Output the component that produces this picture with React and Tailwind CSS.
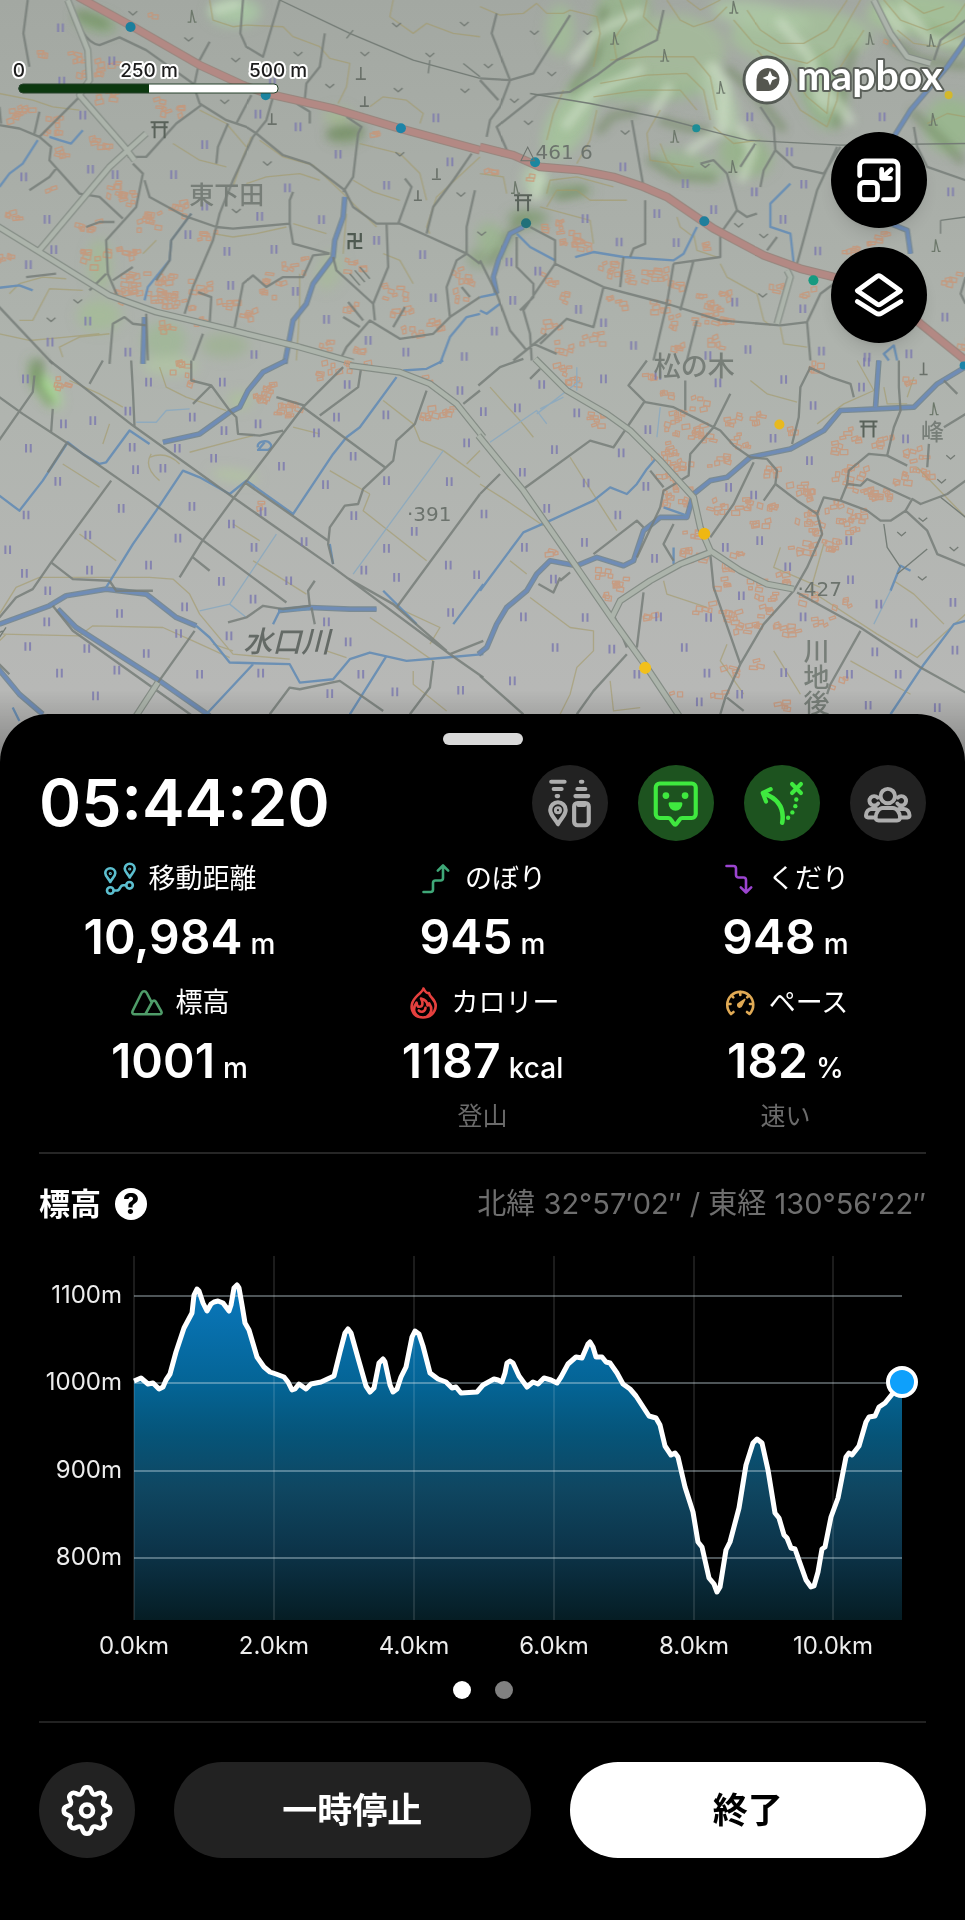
import React, { useState } from 'react';

// Map sheet: four tiles, each 480x360 on screen and drawn at 3x
const TILES = [
  {
    x: 0,
    y: 0,
    highway: 'M235 -10L400 80L600 195L730 255L800 280L1000 325L1200 385L1440 450',
    wide: [
      'M205 0L265 150L270 240L240 285L375 440L405 480',
      'M440 400L330 500L120 750',
      'M-10 675L120 755L330 885L470 935L700 990L900 1040L1060 1085',
    ],
    roads:
      'M85 0L72 100L90 200M250 95Q270 130 300 135L360 112L440 150L580 250L600 310L680 360L740 380L770 400L850 465L930 490L1035 570L1060 620L1130 670L1200 670L1290 710L1400 760L1440 790M240 290L120 410L155 440L150 480L240 580L300 590L370 655M0 375L60 385L120 410M385 470L440 470L530 370L605 315M840 0L790 170L740 140L722 100L730 0M630 125L600 180L585 250M400 490L430 520L410 620L320 720L325 820L355 890M435 540L450 590L550 645L650 680L700 685L870 670L880 730L990 760M870 670L870 600L880 575M820 290L800 360L760 410L700 540L660 640L640 720L580 860L555 940M755 285L710 370M685 370L655 440L650 490M1040 350L1085 380L1075 400L1060 530L1030 575M1415 460L1360 540L1300 620L1280 700M1215 535L1235 560L1195 670M1425 570L1400 680L1400 760L1370 780L1340 860L1350 950L1300 1000L1200 1015L1110 960L1040 1040L1020 1080M1160 670L1165 800L1120 910L1125 960M1000 770L1010 810L1120 910M1350 950L1440 890M1385 860L1410 890M705 980L730 850L760 825L800 860L850 830L910 830L940 765L990 760M595 875L635 890L630 970M-5 915L160 1090M575 640L515 720L510 780L470 840M975 100L960 200L920 250L915 300M90 570L150 530L170 505M120 335L105 400M0 320L5 370M170 820L80 830M330 1090L340 970L375 950L400 970L440 975M440 940L445 1080M1045 905L1090 960M1030 950L1080 980M1215 920L1180 980M260 680L300 665L345 665M270 870L320 820M340 840L400 800M610 1000L580 1080M890 310L930 335L930 370',
    thin: 'M840 0L1050 100L1240 180L1440 235M1060 90L1040 115M1390 190L1440 230M1290 180L1285 220M1050 820L1080 855M1065 810L1095 845M1080 800L1110 835',
    rivers: 'M1035 590L1030 650L1005 720L1000 770L940 850L920 910L880 960L855 1090M435 950L430 1090',
    streams: 'M0 560L30 520L70 490L115 420M575 640L515 720L510 780L445 860L435 900M1440 940L1400 950L1350 1010L1320 1090M250 390L215 430L180 420L150 410M100 870L60 855L0 862',
    contours:
      'M0 280L100 300L160 320L240 330M630 0L640 60L700 80L740 75L850 80L880 110L960 140L990 175L1050 190L1040 260L1015 310M1110 320L1150 290L1220 300L1270 340L1260 370M780 420L850 470L940 495L1030 580L1130 680M520 430L600 480L680 500M1060 540L1120 575L1200 600M1290 700L1280 680L1310 590L1440 470M740 550L800 530L900 520L960 540M30 880L60 850L130 830L200 835M0 1000L90 1020L200 1010L300 1000M900 820L900 920L890 1080M1040 640L1030 760M880 670L980 700M470 720L430 760M1180 0L1170 50L1240 100L1280 70L1360 100L1440 110M1150 760L1200 780L1240 850M190 1070L180 1040L240 1010L330 1000M1080 430L1200 460L1260 520L1280 600M600 330L680 370L740 440M700 560L730 470L755 410M640 700L700 710L770 700L860 680M250 870L150 865L100 960L60 960',
    paddies: [[183, 83], [187, 243], [250, 345], [337, 182], [273, 507], [73, 530], [143, 657], [163, 748], [87, 793], [265, 962], [152, 1025], [385, 1055], [522, 523], [615, 433], [775, 342], [895, 380], [1015, 462], [1308, 353], [1350, 485], [1160, 555], [863, 563], [780, 648], [965, 658], [615, 618], [565, 703], [682, 753], [823, 747], [693, 855], [887, 873], [980, 957], [1130, 720], [1268, 763], [1300, 892], [1105, 1020], [1218, 1055], [763, 1062], [1393, 1068], [347, 523], [818, 245]],
    ticks: [[400, 40], [567, 118], [708, 180], [990, 258], [895, 162], [1095, 162], [1195, 270], [1190, 75], [1393, 72], [1290, 165], [675, 305], [803, 490], [710, 632], [1200, 462], [1383, 583], [155, 958], [235, 903], [1395, 272]],
    houses: [[130, 160, 3], [220, 165, 5], [250, 215, 5], [310, 200, 7], [320, 290, 7], [500, 320, 9], [50, 340, 9], [150, 370, 8], [190, 460, 5], [300, 420, 6], [150, 565, 2], [330, 560, 7], [370, 590, 7], [430, 660, 10], [260, 670, 7], [30, 640, 5], [15, 770, 5], [540, 620, 6], [280, 770, 10], [370, 750, 8], [420, 840, 14], [370, 870, 8], [480, 890, 10], [540, 900, 10], [600, 850, 7], [620, 700, 5], [500, 830, 6], [680, 910, 6], [740, 940, 5], [820, 830, 6], [880, 790, 7], [800, 880, 4], [1060, 790, 6], [1050, 910, 4], [1180, 870, 8], [1200, 930, 5], [1230, 990, 6], [1290, 965, 6], [1390, 820, 8], [1370, 880, 4], [980, 1030, 5], [1130, 400, 3], [445, 45, 2], [500, 970, 5], [600, 960, 4], [1070, 1050, 4]],
  },
  {
    x: 480,
    y: 0,
    highway: 'M0 440L100 465L180 500L300 510L400 530L490 560L560 590L700 685L850 765L960 805L1060 830L1200 880L1320 970L1455 1080',
    wide: ['M920 810L930 830L890 970', 'M1180 0L1230 100L1280 170L1350 190'],
    roads:
      'M50 40L35 100L90 240L60 320L30 360L20 410M270 45L160 220L90 240L0 235M0 240L55 300M85 460L50 380L170 285L270 275L350 225L410 180L530 120L550 30M455 360L490 560M495 600L495 730L460 745L450 770M580 790L720 770L720 700L770 630L740 520L700 480L660 490M770 630L800 650L830 640M225 790L370 860L560 910L720 960L900 975L980 965M225 790L225 720L150 680M225 790L130 930L150 1000L155 1080M370 860L340 980L260 955L180 1030M110 710L110 800L160 850L160 890L120 930M430 770L420 860M580 790L560 910L520 1080M640 780L600 930M0 780L50 880L90 990L140 1050M200 1000L100 1080M650 960L620 1080M980 965L990 1080M980 965L1020 880L1060 850M840 320L880 380L885 450L850 510L840 560M885 450L940 500L1030 520L1080 440M1070 440L1010 570L950 790M825 430L780 500M1300 380L1310 440L1340 500L1455 540M1360 180L1380 120L1455 60M1455 830L1440 880L1455 910M890 710L860 750M160 1030L230 1060',
    thin: 'M150 280L330 310L550 355L700 395L800 420L1080 435L1455 430M1380 660L1455 650M1380 660L1380 700',
    rivers: 'M1470 100L1400 200L1290 330L1240 410M1230 670L1280 690L1290 760M130 680L90 700L55 780L40 830L50 880',
    streams: 'M110 700L150 740L225 780M285 770L340 755L430 770L580 780L610 760L650 680M50 880L0 890M60 910L20 940L0 930M1225 1080L1210 1060L1240 1035L1250 1080M930 550L870 610L870 680L930 700L940 790',
    contours:
      'M0 20L60 45L130 40L170 10L200 40L250 40L270 30L350 50L360 100L340 200M420 0L440 60L400 120L410 180M500 0L490 50L540 100M560 0L600 60L640 80L700 60L740 20M620 0L660 30L720 0M800 30L840 90L900 130L970 130L1040 90L1100 0M760 60L820 130L900 170L980 190L1060 140L1140 0M830 150L900 230L960 330L1040 380L1070 300L1080 200L1150 90M930 210L980 290L1040 340L1050 240M1210 0L1260 60L1340 90L1420 60L1455 10M1270 0L1330 40L1390 20M1250 90L1300 130L1370 140L1455 100M390 180L500 170L640 170L690 230L710 330M360 250L500 225L620 220L670 270L690 360M340 290L480 270L600 270L650 330M250 270L220 340L200 420M350 330L330 420L290 490M540 330L500 400L510 480L640 500M600 520L560 480L540 430M700 380L760 430L840 420M200 620L230 570L290 570L330 600L440 600M720 790L740 830L830 880L850 960L870 975M1340 370L1400 340L1455 350M1090 880L1120 830M200 580L210 540L290 530L400 560M590 650L600 680L640 710M0 520L70 530L80 580M180 620L330 660L340 730M640 700L650 750L710 770M900 980L910 1030L980 1040',
    paddies: [[428, 500], [615, 550], [700, 628], [530, 640], [315, 655], [417, 725], [588, 727], [822, 575], [808, 350], [927, 455], [970, 552], [1205, 350], [908, 657], [1012, 752], [1410, 575], [763, 905], [967, 925], [1393, 950], [803, 1047], [683, 1065], [87, 785], [173, 812], [98, 900], [295, 927], [370, 967], [43, 992], [460, 1035], [1023, 1052], [1285, 1060], [1160, 1070]],
    ticks: [[163, 98], [322, 98], [215, 222], [103, 302], [25, 198], [145, 368], [435, 397], [675, 497], [775, 675], [850, 707], [847, 885], [5, 700]],
    houses: [[210, 680, 7], [250, 710, 8], [300, 730, 5], [370, 800, 8], [460, 820, 6], [520, 820, 8], [200, 830, 4], [235, 885, 4], [400, 900, 5], [540, 910, 6], [580, 850, 4], [690, 900, 9], [730, 950, 7], [660, 950, 5], [570, 960, 5], [210, 975, 5], [240, 1030, 5], [330, 1010, 6], [600, 1030, 5], [700, 1020, 5], [880, 860, 4], [1100, 740, 6], [1180, 710, 6], [1410, 830, 5], [20, 510, 3], [155, 530, 2], [720, 880, 4], [650, 730, 3], [980, 870, 3], [1225, 130, 3], [1440, 1020, 3]],
  },
  {
    x: 0,
    y: 360,
    wide: ['M1050 15L1200 35L1290 70L1370 130L1450 230', 'M400 1080L475 965'],
    roads:
      'M0 110L70 160L200 245L450 420L860 725M150 0L400 195L700 410L1000 620L1350 880L1450 950M1030 20L910 140L700 415L605 545L540 650M-5 245L100 95L105 45M155 215L160 145M335 360L155 605L100 685L50 710L0 770M155 605L220 655L330 660M200 250L145 335M395 0L400 90L405 200M575 0L575 60L635 75L690 150L710 170L715 220L780 225L850 210M635 75L580 130M910 140L1155 320M1280 90L1245 190L1190 240L1180 300L1090 385L1075 430L1035 435L990 500L985 550L1000 610M735 365L985 540M1440 400L1190 740M580 590L630 630M585 810L475 965M685 785L740 770L790 735L850 745L930 735L925 690L945 660M935 740L945 790M1300 900L1290 980L1230 1060M810 1060L870 980L900 985L1020 960L1150 1050M1350 880L1450 840M330 660L350 690L460 690M160 735L220 810L600 1080M310 0L270 70M1390 130L1440 90M1085 15L1075 80L960 165M915 135L830 110M1040 650L1180 730L1340 870M0 910L30 940',
    thin: 'M0 830L20 800M10 810L0 815',
    rivers: 'M0 790L150 735L200 705L320 685L440 700L530 770L590 795M490 245L600 220L690 155L720 140L745 90L790 35L860 0M835 750L930 740L1050 745L1130 745M-10 915L60 1000L130 1060M175 745L230 800L480 960L630 1065',
    streams:
      'M0 405L60 450L130 360L205 245L250 280L300 310L320 305L390 210L450 250M320 680L400 550L470 450L550 330L600 350L690 400L740 360L880 460L1000 280L1040 230L1080 200L1190 50M590 795L630 830L690 905L870 910L900 965L1000 955L1050 895L1110 875L1220 900L1340 890L1450 880M1160 885L1050 1060M760 910L620 1060M990 550L1000 610M820 790L840 750L930 745M1210 30L1280 25L1330 0M1450 670L1360 790M775 260a20 14 0 1 1 30 8l-30 0L795 245M1150 690L1250 790M40 1040L60 1080',
    brooks: 'M830 520L690 730L600 750M690 730L740 770M1330 270L1060 640M410 185L470 185L500 150L570 145',
    contours:
      'M0 760L50 680L120 650L450 650L520 655L570 700L600 760L700 880L870 895M455 280Q430 320 480 360M450 290Q500 270 540 310M570 275L700 240L760 225M880 200L960 220M1150 120L1240 190L1260 240L1330 270L1440 350M1110 400L1090 450L1280 600M990 330L1110 400M700 490L780 540M480 20L500 80L560 110L680 150M190 310L300 380M240 520L350 600M10 820L240 825L280 795L490 800L580 840L690 890M1110 770L1200 830L1300 900M640 850L700 870M0 840L20 820M1240 930L1240 970L1340 1050M1190 740L1320 800L1290 850M760 600L920 700M980 870L1040 890M330 190L310 250M210 60L300 100L370 140M1440 270L1400 310',
    paddies: [[78, 55], [192, 190], [280, 180], [87, 263], [175, 362], [80, 463], [25, 567], [75, 638], [447, 65], [385, 152], [668, 65], [578, 170], [673, 210], [775, 190], [398, 260], [408, 327], [490, 323], [533, 263], [642, 293], [845, 317], [950, 217], [1010, 170], [1042, 72], [1158, 163], [1380, 90], [1400, 247], [1060, 287], [1160, 360], [1348, 363], [977, 372], [1062, 465], [1243, 512], [577, 437], [790, 453], [365, 443], [695, 490], [913, 543], [763, 560], [535, 532], [265, 523], [1160, 563], [1345, 613], [1092, 628], [1190, 650], [447, 613], [270, 628], [665, 662], [867, 660], [145, 690], [760, 715], [555, 738], [360, 758], [142, 783], [1352, 755], [980, 783], [688, 825], [537, 818], [85, 857], [262, 863], [440, 878], [1045, 843], [1083, 940], [783, 937], [600, 940], [352, 928], [180, 937], [288, 1005], [990, 998], [1185, 993], [1382, 988], [1430, 642]],
    ticks: [],
    houses: [[170, 65, 6], [530, 20, 6], [550, 70, 2], [790, 100, 6], [800, 75, 5], [850, 140, 8], [870, 130, 4], [990, 15, 4], [960, 45, 3], [1030, 15, 4], [1090, 15, 4], [1280, 150, 6], [1330, 145, 5], [765, 430, 2], [780, 115, 4], [1275, 50, 3]],
  },
  {
    x: 480,
    y: 360,
    wide: [
      'M-5 225L130 390L290 620L400 780L500 920L600 1070',
      'M165 -5L260 90L380 160L450 210L540 300L640 410L660 500L690 570L780 630L860 670L940 685',
      'M690 575L600 610L510 660L420 720L395 770',
    ],
    roads:
      'M-5 75L60 20L130 -5M180 25L150 55M500 0L445 75L495 125L580 140L650 175L720 210L760 255L810 290L860 295L890 330L885 370L950 420L1010 460L1025 520L980 620L940 690L850 790L780 910L735 1010L720 1060M495 120L400 260L330 240L130 385M750 100L700 200L630 280L625 345L550 390L540 440L470 590M820 305L760 430L690 530M990 20L960 80L955 170L935 250M985 20L1050 50L1110 70L1120 110M1255 0L1255 80L1260 150L1240 200L1220 285L1280 315M1220 285L1165 280L1105 330L1100 370L1080 420L1030 410L1010 460M1080 420L1160 450L1200 480L1230 480L1275 450L1340 510L1370 580L1455 615M1275 450L1295 415L1320 430L1400 400L1455 360M1100 370L1140 375L1160 355L1290 415M1390 200L1455 160M1345 250L1340 320M1390 60L1430 100M690 580L700 680L780 910M950 695L1140 800L1320 920L1455 995M1140 810L1050 970L1040 1000M490 695L470 860M440 880L340 990L290 1060M0 945L130 1060M340 580L470 480L490 500M240 650L220 695L175 670M270 635L240 660M615 60L615 150M60 340L0 400M885 370L850 420M580 490L550 550L580 600M400 760L440 860M740 1010L790 1050M550 380L510 330',
    thin: 'M1380 410L1455 470M1210 490L1220 560L1260 620M1340 565L1250 640',
    rivers:
      'M1470 10L1370 70L1300 140L1190 145L1080 150L1030 210L930 265L810 290L740 350L690 360L640 400L620 470L540 470L490 510L460 600L430 615L350 590L290 615L210 600L170 640L140 690L80 740L50 790L20 860L-5 880M1195 0L1185 140',
    streams: 'M620 465L550 440M0 690L130 515L210 480L340 420L390 380L440 400L470 370L500 325L530 290M1455 780L1420 790L1330 910L1230 1060M580 560L580 610M1290 630L1260 615L1230 690',
    brooks: 'M30 245L170 150L200 190M180 145L250 110M1230 690L1180 790M530 230L540 140M290 90L290 20M170 160L300 60',
    contours:
      'M0 370L80 420L190 495M30 80L120 180L160 230M270 290L320 370L410 510M90 600L140 640M150 710L270 800L340 810L340 870L290 920L270 1000L240 1060M810 60L860 100L950 125M900 560L880 620L1020 680M1030 550L990 690L1190 820L1310 890L1455 760M740 850L720 900L790 1000M1310 320L1455 470M550 660L560 700L680 740M880 870L960 1000M1110 900L1290 1000M1240 660L1300 700L1390 790M1130 0L1180 90L1090 130L1010 190M1210 80L1220 130L1280 130M1300 50L1280 110M390 960L400 1050L480 1040',
    paddies: [[185, 72], [370, 55], [112, 142], [10, 153], [290, 157], [223, 267], [127, 335], [503, 207], [423, 277], [318, 367], [497, 377], [200, 443], [413, 463], [12, 460], [133, 560], [313, 545], [523, 593], [220, 655], [130, 768], [315, 770], [535, 768], [395, 865], [225, 860], [97, 960], [470, 940], [612, 860], [685, 770], [783, 705], [735, 560], [838, 540], [922, 618], [1105, 540], [1110, 657], [968, 768], [1195, 730], [1300, 787], [1183, 873], [1107, 940], [1253, 940], [1423, 868], [1417, 725], [910, 935], [680, 937], [657, 1023], [778, 1000], [987, 300], [878, 233], [998, 135], [910, 57], [713, 67], [1143, 80], [1275, 235], [745, 380], [820, 403], [1163, 1033], [1370, 1040], [533, 45], [1158, 5]],
    ticks: [[1327, 477], [1263, 520], [1420, 565], [1325, 653], [1383, 362], [1410, 290]],
    houses: [[240, 20, 5], [265, 55, 5], [500, 50, 4], [560, 95, 5], [650, 125, 5], [750, 170, 6], [810, 165, 6], [580, 160, 5], [620, 215, 10], [570, 190, 4], [660, 220, 6], [555, 260, 5], [780, 235, 6], [690, 300, 3], [560, 330, 10], [600, 310, 5], [540, 290, 5], [740, 285, 3], [330, 170, 7], [350, 200, 2], [580, 405, 9], [600, 390, 4], [700, 430, 7], [770, 430, 7], [860, 330, 6], [860, 430, 5], [940, 380, 7], [990, 400, 5], [970, 460, 5], [990, 500, 6], [960, 550, 8], [830, 490, 5], [1050, 540, 7], [1100, 490, 8], [1120, 460, 6], [1060, 430, 5], [1120, 330, 8], [1080, 350, 5], [1200, 400, 8], [1140, 390, 6], [1250, 350, 6], [1310, 340, 7], [1300, 280, 7], [1200, 240, 7], [1100, 220, 6], [1080, 260, 5], [630, 510, 5], [605, 570, 5], [650, 590, 4], [770, 575, 3], [730, 620, 5], [720, 665, 4], [820, 670, 5], [850, 700, 5], [900, 650, 5], [370, 630, 5], [420, 660, 6], [370, 700, 3], [210, 570, 3], [500, 765, 3], [660, 735, 5], [740, 750, 6], [790, 790, 10], [840, 750, 5], [900, 790, 4], [980, 710, 5], [1020, 775, 5], [1080, 720, 4], [740, 920, 4], [820, 910, 3], [930, 820, 4], [1070, 960, 3], [900, 1030, 4], [1280, 60, 4], [920, 205, 3], [710, 990, 3], [575, 990, 2], [1010, 15, 4]],
  },
];

// Green slopes: cx, cy, rx, ry, rotation, colour
const HILLS = [
  [96, 22, 22, 9, 15, '#86a87a'],
  [235, 12, 26, 14, 0, '#a9c9a4'],
  [345, 134, 18, 9, 0, '#7f9a70'],
  [338, 116, 14, 8, 0, '#a3b88f'],
  [620, 30, 28, 60, 10, '#98b58d'],
  [570, 120, 20, 42, 30, '#a5c49b'],
  [640, 85, 70, 16, 0, '#9ab990'],
  [675, 50, 50, 36, 0, '#a4bb9a'],
  [690, 165, 36, 12, 15, '#9bb692'],
  [720, 100, 14, 38, -20, '#b4ccac'],
  [745, 155, 28, 20, 20, '#96b489'],
  [800, 36, 70, 28, 0, '#a4bf9a'],
  [822, 90, 22, 40, -15, '#94b488'],
  [760, 16, 50, 14, 10, '#adc8a4'],
  [920, 14, 54, 22, 0, '#a3c296'],
  [950, 125, 26, 28, 0, '#98b78c'],
  [945, 40, 34, 9, 20, '#8cab7f'],
  [560, 30, 14, 26, 0, '#a1bc97'],
  [535, 180, 12, 16, 0, '#b4ceab'],
  [528, 218, 20, 8, 0, '#7d9a6f'],
  [565, 190, 28, 6, 0, '#8aa57d'],
  [492, 240, 14, 18, -30, '#9ab58e'],
  [47, 388, 8, 22, -35, '#a6e28b'],
  [36, 372, 5, 14, -10, '#6f9a58'],
  [100, 315, 22, 16, 0, '#a4bb98'],
  [100, 265, 12, 26, 0, '#a3b897'],
  [165, 340, 22, 18, 0, '#a0b796'],
  [170, 365, 28, 10, 0, '#b0c3a5'],
  [225, 345, 24, 12, 0, '#9fb294'],
  [330, 270, 12, 20, 20, '#a8b99c'],
  [478, 258, 10, 9, 0, '#8ba37e'],
  [240, 400, 12, 8, 0, '#acc19a'],
  [235, 475, 24, 5, 8, '#b3c79f'],
];

// Hill shading: lit ridges and the shaded side below them
const RIDGES =
  'M566 125L590 95L640 70M655 110L668 88M690 150L722 128L724 84L712 66M742 178L752 150L740 128M780 22L812 60L818 100M850 120L828 92M808 66L826 108M902 8L930 40L962 44M536 196L540 176M575 60L600 30L640 12M885 10L900 30M215 10L238 4';
const SHADES =
  'M600 130L612 116L634 112M662 120L680 126L712 132M728 70L752 90L782 128M836 124L842 92L852 50M650 160L676 176L712 178M604 10L596 56L572 90M890 40L920 60L964 66M912 112L940 138L960 160M560 196L582 190M505 240L520 222M332 134L360 130M80 14L104 24M490 262L500 250M40 362L36 382L50 402';

const MAP_DOTS = [
  [131, 27, 5, '#1c7f9d'],
  [266, 95, 5, '#1c84a0'],
  [401, 128, 5, '#1c84a8'],
  [535, 162, 5, '#1c87a0'],
  [696, 128, 4, '#1c8d96'],
  [704, 221, 5, '#1f7f9c'],
  [813, 280, 5, '#179a80'],
  [526, 223, 5, '#21707a'],
  [963, 365, 4, '#1c84a8'],
  [779, 424, 5, '#e8b91e'],
  [704, 533, 6, '#efb712'],
  [645, 667, 6, '#f2c01c'],
  [948, 95, 4, '#d3b82c'],
];

const TREES = [[192, 16], [614, 38], [664, 55], [720, 87], [869, 38], [930, 40], [674, 136], [732, 166], [733, 7], [932, 119], [935, 245], [933, 408], [515, 187]];

// Small house outlines scattered round a point
function housePath([cx, cy, count]) {
  let seed = cx * 31 + cy * 17 + count;
  const next = () => {
    seed = (seed * 1103515245 + 12345) % 2147483648;
    return seed / 2147483648;
  };
  let d = '';
  for (let i = 0; i < count; i++) {
    const spread = 14 + count * 4;
    const x = Math.round(cx + (next() - 0.5) * spread * 1.6);
    const y = Math.round(cy + (next() - 0.5) * spread);
    const w = Math.round(10 + next() * 14);
    const h = Math.round(7 + next() * 9);
    const tilt = Math.round((next() - 0.5) * 12);
    d += `M${x} ${y}l${w} ${tilt}l${-Math.round(tilt / 2)} ${h}l${-w} ${-tilt}z`;
  }
  return d;
}

function Tile({ tile }) {
  return (
    <g transform={`translate(${tile.x} ${tile.y}) scale(0.33333)`} fill="none" strokeLinejoin="round">
      <path d={tile.contours} stroke="#a39a68" strokeOpacity="0.6" strokeWidth="4" />
      <path d={tile.houses.map(housePath).join('')} stroke="#cd926f" strokeOpacity="0.7" strokeWidth="4" />
      <path d={tile.rivers} stroke="#74868f" strokeOpacity="0.9" strokeWidth="17" />
      <path d={tile.rivers} stroke="#6f8cb6" strokeWidth="10" />
      <path d={tile.streams} stroke="#6c90b4" strokeWidth="7" />
      {tile.brooks && <path d={tile.brooks} stroke="#8faabd" strokeWidth="4" />}
      <path d={tile.roads} stroke="#777e79" strokeOpacity="0.85" strokeWidth="7" />
      <path d={tile.thin} stroke="#747c76" strokeWidth="4" />
      {tile.wide.map((d) => (
        <path key={d} d={d} stroke="#858d86" strokeWidth="21" />
      ))}
      {tile.wide.map((d) => (
        <path key={d} d={d} stroke="#acb4ab" strokeWidth="14" />
      ))}
      {tile.highway && <path d={tile.highway} stroke="#98867e" strokeWidth="26" />}
      {tile.highway && <path d={tile.highway} stroke="#b38984" strokeWidth="20" />}
      <path
        d={tile.paddies.map(([x, y]) => `M${x - 7} ${y - 13}v26M${x + 7} ${y - 13}v26`).join('')}
        stroke="#7c7aae"
        strokeOpacity="0.85"
        strokeWidth="6"
      />
      <path d={tile.ticks.map(([x, y]) => `M${x - 13} ${y - 6}l13 11l13 -11`).join('')} stroke="#747b75" strokeWidth="4" />
    </g>
  );
}

function Torii({ x, y }) {
  return (
    <path
      d={`M${x - 9} ${y - 7}h18M${x - 8} ${y - 2}h16M${x - 5} ${y - 7}v16M${x + 5} ${y - 7}v16`}
      stroke="#59625a"
      strokeWidth="2"
      fill="none"
    />
  );
}

function MapView() {
  return (
    <svg className="absolute inset-0 h-full w-full" viewBox="0 0 965 761" preserveAspectRatio="xMidYMin slice" aria-hidden="true">
      <defs>
        <linearGradient id="ground" x1="0" y1="0" x2="0" y2="1">
          <stop offset="0" stopColor="#a3a8a2" />
          <stop offset="0.45" stopColor="#aeb3ad" />
          <stop offset="1" stopColor="#b9b9b8" />
        </linearGradient>
        <linearGradient id="sheetShade" x1="0" y1="0" x2="0" y2="1">
          <stop offset="0" stopColor="#000" stopOpacity="0" />
          <stop offset="1" stopColor="#000" stopOpacity="0.3" />
        </linearGradient>
        <filter id="slope" x="-20%" y="-20%" width="140%" height="140%">
          <feGaussianBlur stdDeviation="6" />
        </filter>
        <filter id="ridge" x="-20%" y="-20%" width="140%" height="140%">
          <feGaussianBlur stdDeviation="4" />
        </filter>
      </defs>
      <rect width="965" height="761" fill="url(#ground)" />
      <g filter="url(#slope)">
        {HILLS.map(([cx, cy, rx, ry, turn, fill]) => (
          <ellipse key={`${cx}-${cy}`} cx={cx} cy={cy} rx={rx} ry={ry} transform={`rotate(${turn} ${cx} ${cy})`} fill={fill} opacity="0.85" />
        ))}
      </g>
      <g filter="url(#ridge)" fill="none" strokeLinejoin="round" strokeLinecap="round">
        <path d={SHADES} stroke="#70885f" strokeOpacity="0.6" strokeWidth="8" />
        <path d={RIDGES} stroke="#d0dfc8" strokeOpacity="0.65" strokeWidth="9" />
      </g>
      {TILES.map((tile) => (
        <Tile key={`${tile.x}-${tile.y}`} tile={tile} />
      ))}
      {MAP_DOTS.map(([x, y, r, fill]) => (
        <circle key={`${x}-${y}`} cx={x} cy={y} r={r} fill={fill} />
      ))}
      <path d={TREES.map(([x, y]) => `M${x - 4} ${y + 6}h3L${x} ${y - 6}L${x + 3} ${y + 6}h2`).join('')} stroke="#6d786b" strokeWidth="1.3" fill="none" />
      <path d="M361 67v12M356 79h10M365 96v10M360 106h9M272 113v10M268 124h9M437 168v10M432 179h9M418 190v10M414 200h8M923 362v12M919 374h8" stroke="#697069" strokeWidth="1.6" fill="none" />
      <Torii x={160} y={129} />
      <Torii x={523} y={202} />
      <Torii x={868} y={428} />
      <g fill="#777e78" fontFamily="'Noto Sans CJK JP', sans-serif" fontWeight="500" textAnchor="middle">
        <text x="227" y="204" fontSize="25">東下田</text>
        <text x="694" y="376" fontSize="27">松の木</text>
        <text x="355" y="248" fontSize="18" fill="#4f5a51" fontWeight="700">卍</text>
        <text x="932" y="439" fontSize="23">峰</text>
        <text x="287" y="651" fontSize="29" fontStyle="italic" fill="#646a66">水口川</text>
        <text x="816" y="637" fontSize="26" textAnchor="start" style={{ writingMode: 'vertical-rl' }}>川地後</text>
      </g>
      <g fill="#6c736d" fontFamily="'DejaVu Sans', sans-serif" fontSize="20">
        <text x="520" y="159">△461 6</text>
        <text x="407" y="520">·391</text>
        <text x="797" y="595">·427</text>
      </g>
      <rect y="690" width="965" height="71" fill="url(#sheetShade)" />
    </svg>
  );
}

function ScaleBar() {
  return (
    <svg className="absolute top-14 left-2" width="320" height="44" viewBox="0 0 320 44" role="img" aria-label="500 m">
      <g
        fontFamily="Inter, sans-serif"
        fontSize="19"
        fontWeight="500"
        textAnchor="middle"
        fill="#1c1c1c"
        stroke="#fff"
        strokeWidth="4"
        strokeLinejoin="round"
        paintOrder="stroke"
      >
        <text x="11" y="21">0</text>
        <text x="141" y="21">250 m</text>
        <text x="270" y="21">500 m</text>
      </g>
      <rect x="11" y="28" width="259" height="9" rx="4" fill="#fff" />
      <path d="M141 28H15a4 4 0 0 0 0 9h126z" fill="#0c380f" />
      <rect x="11" y="28" width="259" height="9" rx="4" fill="none" stroke="#24402a" strokeWidth="1" />
    </svg>
  );
}

function MapboxLogo() {
  return (
    <svg className="absolute top-11 right-1" width="224" height="72" viewBox="0 0 224 72" role="img" aria-label="mapbox">
      <g transform="translate(0 8)">
        <circle cx="30" cy="28" r="23" fill="#fff" stroke="#555b55" strokeWidth="3" />
        <path d="M19.500 39V28a11.500 11.500 0 1 1 12 11z" fill="#55564f" />
        <path d="M33 18.500l2.200 5.300L40.500 26l-5.300 2.200L33 33.500l-2.200-5.300L25.500 26l5.300-2.200z" fill="#fff" />
      </g>
      <text
        x="60"
        y="46"
        fontFamily="Lato, sans-serif"
        fontSize="41"
        fontWeight="700"
        fill="#fff"
        stroke="#5b605a"
        strokeWidth="4"
        strokeLinejoin="round"
        paintOrder="stroke"
      >
        mapbox
      </text>
    </svg>
  );
}

function StatusIcon({ children }) {
  return (
    <svg className="h-full w-full" viewBox="0 0 77 77" fill="none" stroke="currentColor" strokeWidth="4.2" strokeLinecap="round" strokeLinejoin="round">
      {children}
    </svg>
  );
}

const statusButtons = [
  {
    label: '位置情報の送受信',
    active: false,
    icon: (
      <StatusIcon>
        <path d="M19.500 17h13.500M22 24.300h8M25 31.500h1.500M49.500 17h1.500M46 24.300h8M44 31.500h13" />
        <path d="M26.300 60C24 55 18.500 51 18.500 45.500a7.800 7.800 0 0 1 15.600 0C34.100 51 28.600 55 26.300 60z" />
        <circle cx="26.300" cy="45.800" r="2.600" strokeWidth="3" />
        <rect x="42.700" y="38.500" width="14.800" height="22.500" rx="3.500" />
        <path d="M47 40.500h6.200" strokeWidth="4" />
      </StatusIcon>
    ),
  },
  {
    label: 'メッセージ',
    active: true,
    icon: (
      <StatusIcon>
        <path d="M22 18.700h32.500a4 4 0 0 1 4 4v27a4 4 0 0 1-4 4H45c-2 0-2.500.8-3.300 2.300L39 59.500c-.7 1.200-2 1.200-2.700 0L33.800 56c-.8-1.500-1.500-2.300-3.300-2.300H22a4 4 0 0 1-4-4v-27a4 4 0 0 1 4-4z" />
        <circle cx="28.300" cy="31" r="3.400" fill="currentColor" stroke="none" />
        <circle cx="47.700" cy="31" r="3.400" fill="currentColor" stroke="none" />
        <path d="M32.500 39.300h11a5.500 5.500 0 0 1-11 0z" fill="currentColor" strokeWidth="3" />
      </StatusIcon>
    ),
  },
  {
    label: 'ルート外れ警告',
    active: true,
    icon: (
      <StatusIcon>
        <path d="M38.700 58.500C41 45 36 34.500 20 28.700" strokeWidth="4.600" />
        <path d="M27 24.500L19 28.300L22.300 37" />
        <path d="M48.700 19.300l9 9M57.700 19.300l-9 9" />
        <g fill="currentColor" stroke="none">
          <circle cx="53" cy="35" r="2.200" />
          <circle cx="52" cy="41.700" r="2.200" />
          <circle cx="49" cy="48" r="2.200" />
          <circle cx="44.700" cy="53.400" r="2.200" />
        </g>
      </StatusIcon>
    ),
  },
  {
    label: 'グループ',
    active: false,
    icon: (
      <StatusIcon>
        <g strokeWidth="4">
          <circle cx="38.300" cy="31.500" r="7.300" />
          <path d="M33 43.500h10.500c3.600 0 7 4.600 7.200 9.500.1 2.200-.9 3.200-3 3.200H29c-2.200 0-3.200-1-3-3.200.2-4.900 3.500-9.500 7-9.500z" />
          <path d="M28.500 39a4.800 4.800 0 1 1-.5-6M48 39a4.800 4.800 0 1 0 .5-6" />
          <path d="M27 44.500h-5.300c-3 0-5.300 3-5.500 6.500-.1 1.500.6 2.200 2 2.200h6.500M49.500 44.500h5.300c3 0 5.300 3 5.500 6.500.1 1.500-.6 2.200-2 2.200H52" />
        </g>
      </StatusIcon>
    ),
  },
];

function StatIcon({ color, children }) {
  return (
    <svg className="h-[34px] w-[34px] shrink-0" viewBox="0 0 34 34" fill="none" stroke={color} strokeWidth="2.600" strokeLinecap="round" strokeLinejoin="round">
      {children}
    </svg>
  );
}

const stats = [
  {
    label: '移動距離',
    value: '10,984',
    unit: 'm',
    icon: (
      <StatIcon color="#5cbfcf">
        <path d="M7.300 20C6.200 17 2.300 14.500 2.300 11.300a5 5 0 0 1 10 0C12.300 14.500 8.400 17 7.300 20zM26.700 15.500C25.600 12.500 21.700 10 21.700 6.800a5 5 0 0 1 10 0C31.700 10 27.800 12.500 26.700 15.500z" />
        <circle cx="7.300" cy="11.500" r="0.600" strokeWidth="2" />
        <circle cx="26.700" cy="7" r="0.600" strokeWidth="2" />
        <circle cx="7.300" cy="28.500" r="3.300" />
        <circle cx="26.500" cy="23.300" r="3.300" />
        <path d="M10.800 28.500h3c4 0 2.500-5.200 6.500-5.200h3" />
      </StatIcon>
    ),
  },
  {
    label: 'のぼり',
    value: '945',
    unit: 'm',
    icon: (
      <StatIcon color="#3fa878">
        <path d="M4.500 30h7a2.500 2.500 0 0 0 2.500-2.500V21a2.500 2.500 0 0 1 2.500-2.500h5A2.500 2.500 0 0 0 24 16V3.500M18.800 8.700L24 3.500L29.200 8.700" />
      </StatIcon>
    ),
  },
  {
    label: 'くだり',
    value: '948',
    unit: 'm',
    icon: (
      <StatIcon color="#9c45d0">
        <path d="M4.500 4h7A2.500 2.500 0 0 1 14 6.500V13a2.500 2.500 0 0 0 2.500 2.500h5A2.500 2.500 0 0 1 24 18v12.500M18.800 25.300l5.200 5.200l5.200-5.200" />
      </StatIcon>
    ),
  },
  {
    label: '標高',
    value: '1001',
    unit: 'm',
    icon: (
      <StatIcon color="#4f9c69">
        <path d="M11.500 7L2.600 25c-.8 1.700 0 3.300 2 3.300h24.800c2 0 2.800-1.400 1.900-3l-5.500-9.600c-.9-1.500-2.600-1.500-3.500 0L15.500 28M21.500 16L16.800 7c-1.300-2.400-4-2.400-5.300 0" />
      </StatIcon>
    ),
  },
  {
    label: 'カロリー',
    value: '1187',
    unit: 'kcal',
    note: '登山',
    icon: (
      <StatIcon color="#e5403e">
        <path d="M17.500 2.500c-1 3.500-4 4.500-7.500 8.500-8.500 9.500-3.500 20.500 7 20.500s17-11 9-19.500c-2-2-2.700-3-3-5-1.700.5-4-1.500-5.500-4.500z" />
        <path d="M12 30c-5.500-3.500-4.500-9.500-1.500-13.500.3 3 1.300 4.300 2.800 4.300 3.700 0 4-3.800 1.700-8.300 5.500 1.500 6.500 5 6.500 7 1-.3 1.500-1 1.700-2.300 3.300 4.800 2.800 9.800-1.700 12.800" />
        <path d="M12.800 24.500c2.500 2.500 6.500 1 6.700-2.800" />
      </StatIcon>
    ),
  },
  {
    label: 'ペース',
    value: '182',
    unit: '%',
    note: '速い',
    icon: (
      <StatIcon color="#e0aa55">
        <path d="M8 28a13 13 0 1 1 18.500 0l-2.500-2M8 28l2.500-2" />
        <path d="M17.300 6v3M5 18h2.500M29.500 18H27M8.500 9.500l1.800 1.800M26 9.500l-1.800 1.800" />
        <path d="M21.800 13.300l-3.300 6.700a2 2 0 1 1-2.800-2.600z" fill="#e0aa55" strokeWidth="1.500" />
      </StatIcon>
    ),
  },
];

function Stat({ stat }) {
  return (
    <div className="flex flex-col items-center">
      <div className="flex h-10 items-center gap-3 text-[27px]">
        {stat.icon}
        <span>{stat.label}</span>
      </div>
      <p className="mt-2 text-5xl leading-[60px] font-semibold">
        {stat.value} <span className="-ml-1 text-[28px] font-medium">{stat.unit}</span>
      </p>
      {stat.note && <p className="h-9 text-[25px] leading-9 text-[#6b6b6b]">{stat.note}</p>}
    </div>
  );
}

const profile =
  '0,125 7,122 14,128 19,127 25,133 29,131 32,124 36,118 42,96 50,72 58,57 60,39 63,33 65,35 69,47 73,55 77,48 80,46 84,45 89,47 95,55 97,49 100,32 103,29 105,32 108,49 111,67 115,74 123,101 130,111 136,116 142,118 150,121 154,126 158,134 161,133 165,128 172,133 177,128 187,126 200,120 206,96 211,77 214,73 217,77 224,102 232,130 236,136 240,132 245,107 249,103 251,106 256,129 259,136 263,133 267,121 272,111 278,81 281,75 285,78 289,90 296,117 304,123 312,126 318,132 322,131 327,137 343,136 349,129 360,123 364,124 368,126 371,117 373,107 376,105 379,107 385,120 393,131 399,126 404,128 410,122 417,124 423,127 427,121 434,108 442,101 448,102 454,88 456,86 459,91 462,101 468,101 472,106 476,107 483,117 489,128 496,133 502,140 515,160 522,162 526,169 531,190 537,199 541,197 544,201 551,231 559,256 564,286 568,291 575,322 580,328 583,336 586,331 592,294 596,286 605,252 612,209 619,187 623,183 628,187 634,214 641,257 645,262 650,279 653,282 657,292 661,293 672,324 677,331 680,330 684,316 688,293 691,291 697,261 704,242 712,201 715,197 718,199 725,190 732,166 735,161 741,160 745,151 751,147 768,126';

function ElevationChart() {
  return (
    <svg className="mt-8 block w-full overflow-visible" viewBox="0 0 887 408" role="img" aria-label="標高グラフ">
      <defs>
        <linearGradient id="fill" gradientUnits="userSpaceOnUse" x1="0" y1="29" x2="0" y2="364">
          <stop offset="0" stopColor="#0a78bd" />
          <stop offset="0.3" stopColor="#046495" />
          <stop offset="0.45" stopColor="#065478" />
          <stop offset="0.6" stopColor="#0f4762" />
          <stop offset="0.8" stopColor="#0c3348" />
          <stop offset="1" stopColor="#051d24" />
        </linearGradient>
      </defs>
      <g transform="translate(95 0)">
        <polygon points={`0,364 ${profile} 768,364`} fill="url(#fill)" />
        <path d="M0 0V364M140 0V364M280 0V364M420 0V364M560 0V364M699 0V364" stroke="#fff" strokeOpacity="0.15" strokeWidth="1.500" />
        <path d="M0 40H768M0 127H768M0 215H768M0 302H768" stroke="#cfe3ea" strokeOpacity="0.5" strokeWidth="1.500" />
        <polyline points={profile} fill="none" stroke="#fff" strokeWidth="5" strokeLinejoin="round" />
        <circle cx="768" cy="126" r="14" fill="#0ea0fb" stroke="#fff" strokeWidth="4" />
      </g>
      <g fill="#ededed" fontFamily="Inter, sans-serif" fontSize="24">
        <g textAnchor="end">
          <text x="83" y="47">1100m</text>
          <text x="83" y="134">1000m</text>
          <text x="83" y="222">900m</text>
          <text x="83" y="309">800m</text>
        </g>
        <g textAnchor="middle">
          <text x="95" y="398">0.0km</text>
          <text x="235" y="398">2.0km</text>
          <text x="375" y="398">4.0km</text>
          <text x="515" y="398">6.0km</text>
          <text x="655" y="398">8.0km</text>
          <text x="794" y="398">10.0km</text>
        </g>
      </g>
    </svg>
  );
}

function App() {
  const [page, setPage] = useState(0);

  return (
    <div className="flex min-h-screen flex-col bg-black font-['Inter','Noto_Sans_CJK_JP',sans-serif] text-white" lang="ja">
      {/* Map */}
      <section className="relative min-h-[420px] flex-1 overflow-hidden">
        <MapView />
        <ScaleBar />
        <MapboxLogo />
        <div className="absolute top-33 right-[38px] flex flex-col gap-[19px]">
          <button type="button" aria-label="地図を縮小" className="h-24 w-24 rounded-full bg-black shadow-lg">
            <svg viewBox="0 0 96 96" fill="none" stroke="currentColor" strokeWidth="4.800" strokeLinecap="round" strokeLinejoin="round">
              <path d="M28.700 43.500V34a5 5 0 0 1 5-5H62a5 5 0 0 1 5 5v28.700a5 5 0 0 1-5 5H52.500" />
              <rect x="28.700" y="50.500" width="17.800" height="17.200" rx="4" />
              <path d="M60 37.500l-8.500 8M50.700 37.500v8.800h8.800" />
            </svg>
          </button>
          <button type="button" aria-label="地図の種類" className="h-24 w-24 rounded-full bg-black shadow-lg">
            <svg viewBox="0 0 96 96" fill="none" stroke="currentColor" strokeWidth="4.800" strokeLinecap="round" strokeLinejoin="round">
              <path d="M46.200 29.200q1.600-1 3.200 0L69.500 43.700L49.400 57.300q-1.600 1-3.200 0L26.300 43.700z" />
              <path d="M26.300 54.500L45 66.200q2.800 1.700 5.600 0L70 54.500" />
            </svg>
          </button>
        </div>
      </section>

      {/* Activity panel */}
      <main className="relative -mt-12 rounded-t-[48px] bg-black pt-[19px] pb-[62px]">
        <div className="mx-auto h-3 w-20 rounded-full bg-[#d9d9d9]" />

        <div className="mt-5 flex items-center justify-between px-[39px]">
          <h1 className="text-[64px] leading-[76px] font-semibold">05:44:20</h1>
          <div className="flex gap-[30px]">
            {statusButtons.map((item) => (
              <button
                key={item.label}
                type="button"
                aria-label={item.label}
                aria-pressed={item.active}
                className={`h-[76px] w-[76px] rounded-full ${item.active ? 'bg-[#1d531f] text-[#3fe93f]' : 'bg-[#222] text-[#aeaeae]'}`}
              >
                {item.icon}
              </button>
            ))}
          </div>
        </div>

        <div className="mt-[18px] grid grid-cols-3 gap-y-[9px] px-7">
          {stats.map((stat) => (
            <Stat key={stat.label} stat={stat} />
          ))}
        </div>

        <div className="px-[39px]">
          <hr className="mt-[18px] border-t-2 border-[#262626]" />

          <div className="mt-[30px] flex items-center justify-between">
            <div className="flex items-center gap-[14px]">
              <h2 className="text-[31px] leading-10 font-bold">標高</h2>
              <button type="button" aria-label="標高について" className="h-8 w-8 rounded-full bg-white text-[28px] leading-8 font-extrabold text-black">
                ?
              </button>
            </div>
            <p className="text-[29px] leading-10 text-[#6e6e6e]">北緯 32°57′02″ / 東経 130°56′22″</p>
          </div>

          <ElevationChart />

          <div className="mt-[17px] flex justify-center gap-6">
            {[0, 1].map((n) => (
              <button
                key={n}
                type="button"
                aria-label={`${n + 1}`}
                onClick={() => setPage(n)}
                className={`h-[18px] w-[18px] rounded-full ${page === n ? 'bg-white' : 'bg-[#808080]'}`}
              />
            ))}
          </div>

          <hr className="mt-[22px] border-t-2 border-[#222]" />

          <div className="mt-[39px] flex gap-[39px]">
            <button type="button" aria-label="設定" className="h-24 w-24 shrink-0 rounded-full bg-[#222]">
              <svg viewBox="0 0 96 96" fill="none" stroke="currentColor" strokeWidth="4.600" strokeLinejoin="round">
                <path d="M44 28c1.200-3.600 6.800-3.600 8 0l.8 2.200c.7 2 2.800 2.900 4.700 2l2.100-1c3.400-1.600 7.300 2.300 5.700 5.700l-1 2.100c-.9 1.900 0 4 2 4.700l2.200.8c3.600 1.200 3.600 6.800 0 8l-2.200.8c-2 .7-2.900 2.800-2 4.700l1 2.100c1.600 3.400-2.300 7.300-5.700 5.700l-2.100-1c-1.900-.9-4 0-4.700 2L52 69c-1.200 3.600-6.800 3.600-8 0l-.8-2.200c-.7-2-2.800-2.900-4.700-2l-2.100 1c-3.400 1.600-7.300-2.300-5.700-5.700l1-2.100c.9-1.900 0-4-2-4.700l-2.200-.8c-3.600-1.200-3.600-6.800 0-8l2.200-.8c2-.7 2.900-2.800 2-4.700l-1-2.100c-1.600-3.400 2.300-7.300 5.700-5.700l2.100 1c1.900.9 4 0 4.700-2z" />
                <circle cx="48" cy="48.500" r="6" />
              </svg>
            </button>
            <button type="button" className="h-24 flex-1 rounded-full bg-[#222] text-[35px] font-bold">
              一時停止
            </button>
            <button type="button" className="h-24 flex-1 rounded-full bg-white text-[35px] font-bold text-black">
              終了
            </button>
          </div>
        </div>
      </main>
    </div>
  );
}

export default App;
